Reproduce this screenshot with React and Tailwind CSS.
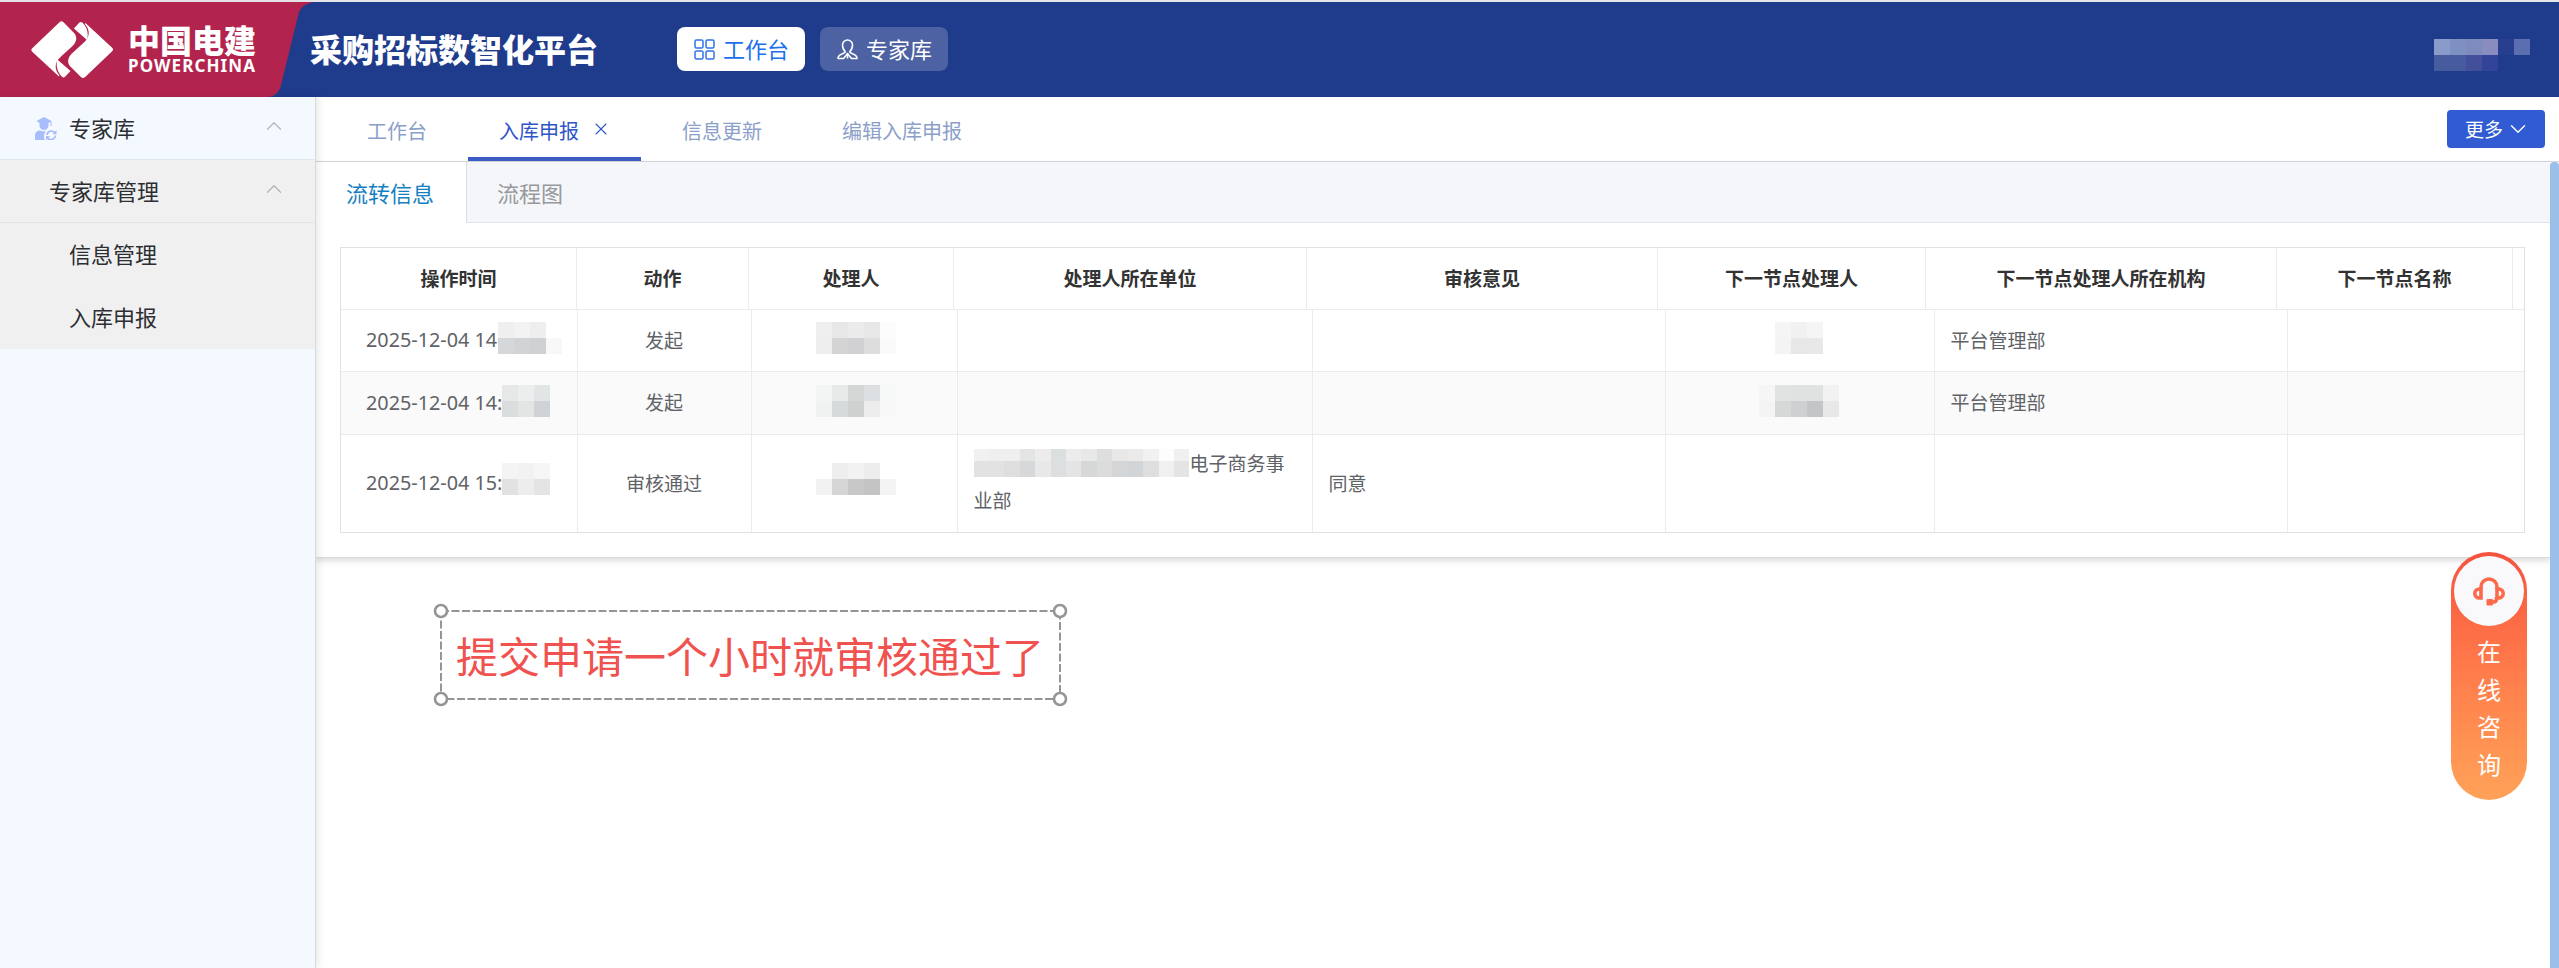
import { ChevronDown, ChevronUp, X } from 'lucide-react'

const headCols = [
  { label: '操作时间', width: 'w-[236px]' },
  { label: '动作', width: 'w-[172px]' },
  { label: '处理人', width: 'w-[205px]' },
  { label: '处理人所在单位', width: 'w-[353px]' },
  { label: '审核意见', width: 'w-[351px]' },
  { label: '下一节点处理人', width: 'w-[268px]' },
  { label: '下一节点处理人所在机构', width: 'w-[351px]' },
  { label: '下一节点名称', width: 'w-[236px]' },
]

const rows = [
  {
    time: '2025-12-04 14',
    timeMask: [['#efefef', '#f3f3f3', '#eeeeee', 'transparent'], ['#d6d7d8', '#d2d3d4', '#d0d1d2', '#f8f8f8']],
    action: '发起',
    handler: [
      ['#efefef', '#e7e7e7', '#ebebeb', '#e7e7e7', '#fcfcfc'],
      ['#eeeeee', '#d4d4d4', '#d1d1d3', '#dddddd', '#fafafa'],
    ],
    next: [['#f5f5f5', '#f1f1f1', '#f5f5f5'], ['#f4f4f4', '#e7e7e7', '#e8e8e8']],
    org: '平台管理部',
  },
  {
    time: '2025-12-04 14:',
    timeMask: [['#e6e8e8', '#eceeee', '#e2e5e6'], ['#dadddd', '#e3e4e4', '#cfd3d5']],
    action: '发起',
    handler: [
      ['#f3f4f4', '#e8eaea', '#d4d6d6', '#dce0e2', '#f7f8f8'],
      ['#f0f1f1', '#d7dadb', '#cfd1d1', '#ededed', '#f8f8f8'],
    ],
    next: [
      ['#f6f6f6', '#e1e3e3', '#e0e2e2', '#e0e2e2', '#f2f2f2'],
      ['#f4f4f4', '#d6d8d8', '#cfd0d1', '#c3c5c6', '#e8e8e8'],
    ],
    org: '平台管理部',
  },
  {
    time: '2025-12-04 15:',
    timeMask: [['#f4f4f4', '#f2f2f2', '#f6f6f6'], ['#e2e2e2', '#ededed', '#e4e4e4']],
    action: '审核通过',
    handler: [
      ['#ffffff', '#eeeeee', '#f2f2f2', '#ededed', '#ffffff'],
      ['#f2f2f2', '#d5d5d5', '#c8c8c8', '#c4c4c4', '#f4f4f4'],
    ],
    opinion: '同意',
  },
]

const unitMask = [
  ['#f1f1f1', '#efefef', '#efefef', '#e3e5e5', '#ececec', '#dcdfe0', '#ececec', '#e7e8e8', '#dedede', '#e8e8e8', '#eaeaea', '#f1f1f1', '#fdfdfd', '#f0f0f0'],
  ['#e2e2e2', '#e2e2e2', '#dedede', '#d6d8da', '#e8e8e8', '#dcdedf', '#e4e4e4', '#d5d7d9', '#dcdcdc', '#d3d5d7', '#d2d5d7', '#dedede', '#f0f0f0', '#e4e4e4'],
]

const userMask = [
  ['#8a9acb', '#7d90c0', '#7d8bbd', '#8a8bbe', '#273f8e', '#5a6eb0'],
  ['#465c9f', '#465c9f', '#434f9b', '#314497', 'transparent', 'transparent'],
]

const Mosaic = ({ cells, className = '' }) => (
  <span className={`inline-block shrink-0 ${className}`}>
    {cells.map((line, i) => (
      <span key={i} className="flex">
        {line.map((color, j) => (
          <span key={j} className="h-4 w-4" style={{ backgroundColor: color }} />
        ))}
      </span>
    ))}
  </span>
)

const LogoHalf = () => (
  <>
    <path d="M1.5 27 28.500 1.200Q30.500 -.5 32.500 1.300L43.500 12.500C46.500 16.500 45.500 21 41.500 25L29.500 36C23.500 41.500 23 48 28.500 54.500L28 55.500 1.500 31Q-.8 29 1.500 27Z" />
    <path d="M26.300 38.500L39.500 50 34 55.800Q32.500 57.200 31 55.800C26 50.500 24.800 45 26.300 38.500Z" />
  </>
)

const Logo = () => (
  <svg className="h-[58px] w-[84px]" viewBox="0 0 84 58" fill="#fff">
    <LogoHalf />
    <g transform="rotate(180 41.200 28.700)">
      <LogoHalf />
    </g>
  </svg>
)

const GridIcon = () => (
  <svg className="h-[21px] w-[21px]" viewBox="0 0 21 21" fill="none" stroke="#2f74e8" strokeWidth="1.500">
    <rect x="1" y="1" width="8" height="8" rx="1.500" />
    <rect x="12" y="1" width="8" height="8" rx="1.500" />
    <rect x="1" y="12" width="8" height="8" rx="1.500" />
    <rect x="12" y="12" width="8" height="8" rx="1.500" />
  </svg>
)

const PersonIcon = () => (
  <svg className="h-[21px] w-[21px]" viewBox="0 0 21 21" fill="none" stroke="#fff" strokeWidth="1.600" strokeLinejoin="round">
    <path d="M8.200 12.500C6 10.500 5.500 8 5.500 6a5 5 0 0 1 10 0c0 2-.5 4.500-2.700 6.500 0 1.300 1 1.700 3.200 2.500 2.500.9 4 2 4 4.500h-5.500L12 16.500l-1.500-2-1.500 2-2.500 3H1c0-2.500 1.500-3.600 4-4.500 2.200-.8 3.200-1.200 3.200-2.500Z" />
    <path d="M10.500 14.500v5" />
  </svg>
)

const ExpertIcon = () => (
  <svg className="h-[23px] w-[22px]" viewBox="0 0 22 23" fill="#a9bcfb">
    <path d="M9 0 16.500 4v5h-1V5L13.500 6v2.500a4.500 4.500 0 0 1-9 0V6L1.500 4Z" />
    <path d="M0 23v-5q0-4 4.500-4.500L9 14.500l2-1Q9 16 9 19t1.200 4Z" />
    <path d="M12 18a4.500 4.500 0 0 1 8-2.200M20.500 18.500a4.500 4.500 0 0 1-8 2.400" fill="none" stroke="#a9bcfb" strokeWidth="1.800" />
    <path d="M21.500 13v4.200h-4ZM11 23.200v-4.200h4Z" />
  </svg>
)

const HeadsetIcon = () => (
  <svg className="h-[29px] w-[32px]" viewBox="0 0 32 29" fill="none" stroke="#fb6a4b" strokeWidth="3.600">
    <path d="M8 12V10a8 8 0 0 1 16 0v2" />
    <path d="M8 12v9H6.300a4.500 4.500 0 0 1 0-9ZM24 12v9h1.700a4.500 4.500 0 0 0 0-9Z" />
    <path d="M23.500 20v2q0 3-3 3h-4" />
    <rect x="13.500" y="22" width="6.500" height="6.500" rx="1" fill="#fb6a4b" stroke="none" />
  </svg>
)

const Header = () => (
  <header className="flex h-[97px] items-stretch border-t-2 border-[#e4e4e8] bg-[#1f3b8b]">
    <div className="relative h-[95px] w-[310px]">
      <svg className="absolute inset-0 h-[95px] w-[314px]" viewBox="0 0 314 95">
        <path d="M0 0H314Q300 2 298 14L281 83Q278 95 267 95H0Z" fill="#b2244e" />
      </svg>
      <div className="relative flex pt-[19px] pl-[31px]">
        <Logo />
        <div className="ml-[13px] text-white">
          <div className="text-[32px] leading-[36px] font-black whitespace-nowrap">中国电建</div>
          <div className="font-['Noto_Sans'] text-[17px] leading-[18px] font-bold tracking-[1.1px]">POWERCHINA</div>
        </div>
      </div>
    </div>
    <h1 className="w-[367px] pt-[23px] text-[32px] leading-[46px] font-black whitespace-nowrap text-white">采购招标数智化平台</h1>
    <nav className="flex gap-[15px] pt-[25px]">
      <button className="flex h-11 w-32 items-center rounded-lg bg-white pl-[17px] text-[22px] text-[#2070ee]">
        <GridIcon />
        <span className="-mt-0.5 ml-2">工作台</span>
      </button>
      <button className="flex h-11 w-32 items-center rounded-lg bg-[#4c62a3] pl-[17px] text-[22px] text-white">
        <PersonIcon />
        <span className="-mt-0.5 ml-2">专家库</span>
      </button>
    </nav>
    <Mosaic cells={userMask} className="mt-[37px] mr-[29px] ml-auto" />
  </header>
)

const Sidebar = () => (
  <aside className="z-10 w-[316px] shrink-0 border-r border-[#d5dae1] bg-[#f4f9ff] text-[22px] text-[#2c2e31] shadow-[2px_0_8px_rgba(0,0,0,0.1)]">
    <div className="flex h-[63px] items-center border-b border-[#e1e8ec] pr-7 pl-[35px]">
      <ExpertIcon />
      <span className="-mt-0.5 ml-3">专家库</span>
      <ChevronUp className="-mt-1 ml-auto h-[26px] w-[26px] text-[#b0b3b8]" strokeWidth={1.1} />
    </div>
    <div className="h-[189px] bg-[#f0f0f0]">
      <div className="flex h-[63px] items-center border-b border-[#e1e5e8] pr-7 pl-[49px]">
        <span className="-mt-0.5">专家库管理</span>
        <ChevronUp className="-mt-1 ml-auto h-[26px] w-[26px] text-[#b0b3b8]" strokeWidth={1.1} />
      </div>
      <div className="flex h-[63px] items-center pb-0.5 pl-[69px]">信息管理</div>
      <div className="flex h-[63px] items-center pb-0.5 pl-[69px]">入库申报</div>
    </div>
  </aside>
)

const PageTabs = () => (
  <div className="flex h-[65px] items-stretch border-b border-[#d2d5da] text-[20px] text-[#8ba0c9]">
    <div className="flex w-[152px] items-center pt-1 pl-[51px]">工作台</div>
    <div className="flex w-[173px] items-center border-b-4 border-[#3a5cc4] pt-2 pl-[31px] text-[#2f55c8]">
      入库申报
      <X className="-mt-1 ml-3 h-5 w-5" strokeWidth={1.3} />
    </div>
    <div className="flex items-center pt-1 pl-[41px]">信息更新</div>
    <div className="flex items-center pt-1 pl-[80px]">编辑入库申报</div>
    <button className="mt-[13px] mr-[14px] ml-auto flex h-[38px] w-[98px] items-center rounded bg-[#305bd3] pl-[18px] text-[19px] text-white">
      更多
      <ChevronDown className="ml-0.5 h-[26px] w-[26px]" strokeWidth={1.3} />
    </button>
  </div>
)

const RecordTable = () => (
  <div className="mr-[25px] ml-[24px] border border-[#dfe1e4] text-[19px]">
    <div className="flex h-[62px] border-b border-[#e9ebee] font-bold text-[#333]">
      {headCols.map((col) => (
        <div key={col.label} className={`flex shrink-0 items-center justify-center border-r border-[#e9ebee] ${col.width}`}>
          {col.label}
        </div>
      ))}
    </div>
    <table className="w-full table-fixed border-collapse text-[#606266]">
      <colgroup>
        <col className="w-[236px]" />
        <col className="w-[174px]" />
        <col className="w-[206px]" />
        <col className="w-[355px]" />
        <col className="w-[353px]" />
        <col className="w-[269px]" />
        <col className="w-[353px]" />
        <col />
      </colgroup>
      <tbody className="[&_td]:border-[#e9ebee] [&_td]:p-0 [&_td:not(:last-child)]:border-r [&_tr:not(:last-child)]:border-b [&_tr]:border-[#e9ebee]">
        {rows.map((row, i) => (
          <tr key={i} className={i === 2 ? 'h-[98px]' : i === 1 ? 'h-[63px] bg-[#fafafa]' : 'h-[61px]'}>
            <td>
              <div className="flex items-center">
                <span className="w-[134px] pl-[25px] font-['Noto_Sans'] text-[19.8px] whitespace-nowrap">{row.time}</span>
                <Mosaic cells={row.timeMask} className={i === 2 ? '-mt-2 ml-[27px]' : i === 1 ? '-mt-1 ml-[27px]' : '-mt-1 ml-[23px]'} />
              </div>
            </td>
            <td className="text-center">{row.action}</td>
            <td>
              <div className="flex justify-center pl-1">
                <Mosaic cells={row.handler} className={i === 2 ? '-mt-2' : '-mt-1'} />
              </div>
            </td>
            <td>
              {i === 2 && (
                <div className="-mt-1 pl-4 leading-[37px]">
                  <div className="flex items-center">
                    <Mosaic cells={unitMask} className="w-[216px] [&>span:first-child>span]:h-3" />
                    电子商务事
                  </div>
                  <div>业部</div>
                </div>
              )}
            </td>
            <td>
              <span className="pl-4">{row.opinion}</span>
            </td>
            <td>
              <div className="flex justify-center pr-0.5">{row.next && <Mosaic cells={row.next} className="-mt-1" />}</div>
            </td>
            <td>
              <span className="pl-4">{row.org}</span>
            </td>
            <td />
          </tr>
        ))}
      </tbody>
    </table>
  </div>
)

const Note = () => (
  <div className="relative mt-[53px] ml-[125px] h-[88px] w-[619px] pl-[15px] text-[42px] leading-[88px] whitespace-nowrap text-[#f0524f]">
    <svg className="absolute -top-2 -left-2 h-[104px] w-[635px]" viewBox="0 0 635 104" fill="none" stroke="#959595">
      <rect x="8" y="8" width="619" height="88" strokeWidth="2" strokeDasharray="8 2.500" />
      <g fill="#fff" strokeWidth="2.600">
        <circle cx="8" cy="8" r="6" />
        <circle cx="627" cy="8" r="6" />
        <circle cx="8" cy="96" r="6" />
        <circle cx="627" cy="96" r="6" />
      </g>
    </svg>
    提交申请一个小时就审核通过了
  </div>
)

const Consult = () => (
  <div className="absolute top-[552px] right-8 z-20 flex h-[248px] w-[76px] flex-col items-center rounded-full bg-linear-to-b from-[#f4523f] via-[#ff7549] via-40% to-[#ffa258] pt-1 text-[24px] leading-[37.600px] text-white">
    <div className="mb-[6px] flex h-[70px] w-[70px] shrink-0 items-center justify-center rounded-full bg-[#f9f9fc]">
      <HeadsetIcon />
    </div>
    {['在', '线', '咨', '询'].map((char) => (
      <span key={char}>{char}</span>
    ))}
  </div>
)

export default function App() {
  return (
    <div className="relative flex h-[968px] w-full flex-col overflow-hidden bg-white font-['Noto_Sans_CJK_SC',sans-serif]">
      <Header />
      <div className="flex flex-1">
        <Sidebar />
        <main className="min-w-0 flex-1">
          <PageTabs />
          <div className="flex">
            <div className="min-w-0 flex-1">
              <section className="h-[396px] border-b border-[#dcdcdc] shadow-[0_3px_6px_rgba(0,0,0,0.14)]">
                <div className="mb-[24px] flex h-[61px] text-[22px]">
                  <div className="w-[151px] border-r border-[#d8dde6] pt-[13px] pl-[30px] leading-[34px] text-[#1480c2]">流转信息</div>
                  <div className="flex-1 border-b border-[#dfe3ea] bg-[#f4f6fa] pt-[13px] pl-[30px] leading-[34px] text-[#97999c]">流程图</div>
                </div>
                <RecordTable />
              </section>
              <Note />
            </div>
            <div className="h-[806px] w-[9px] rounded-t bg-[#9bbfe9]" />
          </div>
        </main>
      </div>
      <Consult />
    </div>
  )
}
